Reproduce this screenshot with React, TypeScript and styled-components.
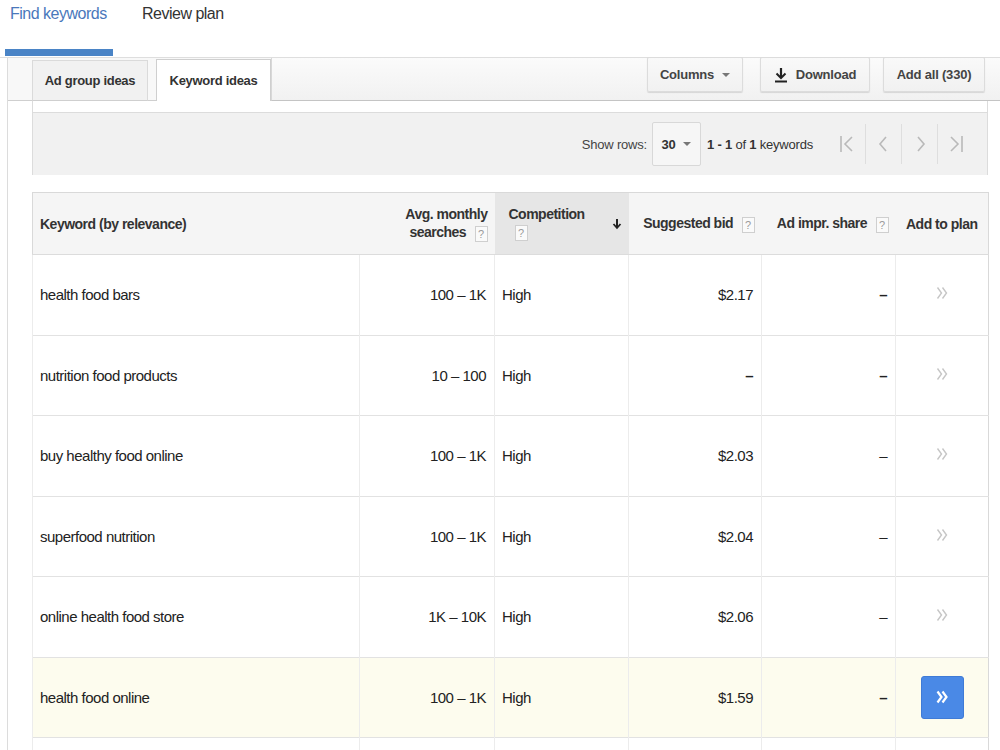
import React from "react";
import styled, { createGlobalStyle, css } from "styled-components";

const FONT = `"Liberation Sans", Arial, Helvetica, sans-serif`;

const Global = createGlobalStyle`
  html, body { margin: 0; padding: 0; background: #fff; }
  body { font-family: ${FONT}; color: #222; width: 1000px; height: 750px; overflow: hidden; }
  * { box-sizing: border-box; }
`;

const Page = styled.div`
  width: 1000px;
  height: 750px;
  overflow: hidden;
  display: flex;
  flex-direction: column;
  & > * { flex-shrink: 0; }
`;

const NavBar = styled.nav`
  display: flex;
  gap: 24px;
  height: 58px;
  padding-left: 5px;
  border-bottom: 1px solid #dedede;
  white-space: nowrap;
`;

const NavItem = styled.div<{ $active?: boolean }>`
  display: flex;
  flex-direction: column;
  justify-content: space-between;
  padding: 5px 0 1px 5px;
  width: ${(p) => (p.$active ? "108px" : "auto")};
  font-size: 16px;
  letter-spacing: -0.5px;
  color: ${(p) => (p.$active ? "#4a78bb" : "#333")};
`;

const NavBarIndicator = styled.div`
  height: 7px;
  margin-left: -5px;
  background: #4a84c6;
`;

const Frame = styled.div`
  flex: 1;
  margin-left: 7px;
  border-left: 1px solid #dcdcdc;
  display: flex;
  flex-direction: column;
  & > * { flex-shrink: 0; }
`;

const TabRow = styled.div`
  display: flex;
  height: 43px;
  background: #f8f8f8;
  white-space: nowrap;
`;

const TabLead = styled.div`
  width: 24px;
  border-bottom: 1px solid #cfcfcf;
`;

const Tab = styled.div<{ $active?: boolean }>`
  display: flex;
  align-items: center;
  justify-content: center;
  font-size: 13px;
  letter-spacing: -0.3px;
  font-weight: bold;
  color: #333;
  margin-top: 2px;
  border: 1px solid #dadada;
  ${(p) =>
    p.$active
      ? css`
          width: 115px;
          background: #fff;
          border-color: #cfcfcf;
          border-bottom: none;
          margin-top: 1px;
        `
      : css`
          width: 116px;
          background: #f1f1f1;
          border-bottom-color: #cfcfcf;
        `}
`;

const TabGap = styled.div`
  width: 8px;
  border-bottom: 1px solid #cfcfcf;
`;

const ActionBar = styled.div`
  flex: 1;
  display: flex;
  justify-content: flex-end;
  align-items: flex-start;
  padding-right: 15px;
  background: linear-gradient(#fbfbfb, #f1f1f1);
  border-left: 1px solid #d8d8d8;
  border-bottom: 1px solid #c4c4c4;
`;

const ActionButton = styled.div<{ $w: number; $ml: number }>`
  width: ${(p) => p.$w}px;
  margin-left: ${(p) => p.$ml}px;
  height: 35px;
  margin-top: -1px;
  display: flex;
  align-items: center;
  justify-content: center;
  gap: 8px;
  font-size: 13px;
  letter-spacing: -0.2px;
  font-weight: bold;
  color: #444;
  background: linear-gradient(#f9f9f9, #f1f1f1);
  border: 1px solid #dcdcdc;
  box-shadow: 0 1px 1px rgba(0, 0, 0, 0.12);
  border-radius: 2px;
`;

const Caret = styled.span`
  display: inline-block;
  width: 0;
  height: 0;
  border-left: 4px solid transparent;
  border-right: 4px solid transparent;
  border-top: 4px solid #777;
`;

const Content = styled.div`
  padding: 0 12px 0 24px;
  display: flex;
  flex-direction: column;
  & > * { flex-shrink: 0; }
`;

const Panel = styled.div`
  border-left: 1px solid #dcdcdc;
  border-right: 1px solid #dcdcdc;
  padding-top: 11px;
`;

const Toolbar = styled.div`
  height: 63px;
  background: #f1f1f1;
  border-top: 1px solid #dcdcdc;
  display: flex;
  align-items: center;
  justify-content: flex-end;
  padding-right: 14px;
  font-size: 13px;
  letter-spacing: -0.2px;
  color: #444;
  white-space: nowrap;
`;

const ShowRowsLabel = styled.span`
  margin-right: 5px;
`;

const RowSelect = styled.div`
  width: 49px;
  height: 44px;
  display: flex;
  align-items: center;
  justify-content: center;
  gap: 8px;
  background: #f6f6f6;
  border: 1px solid #d8d8d8;
  border-radius: 2px;
  font-weight: bold;
  color: #333;
`;

const RangeText = styled.span`
  margin-left: 6px;
  margin-right: 16px;
  color: #333;
  b { font-weight: bold; }
`;

const Pager = styled.div`
  display: flex;
  align-items: center;
  height: 40px;
`;

const PagerBtn = styled.div<{ $sep?: boolean }>`
  width: 36px;
  height: 40px;
  display: flex;
  align-items: center;
  justify-content: center;
  border-left: ${(p) => (p.$sep ? "1px solid #dedede" : "none")};
`;

const Table = styled.table`
  margin-top: 17px;
  width: 956px;
  border-collapse: collapse;
  table-layout: fixed;
  border: 1px solid #d9d9d9;
`;

const HeadCell = styled.th<{ $align?: string; $sorted?: boolean }>`
  height: 62px;
  padding: 0 7px 0 7px;
  background: ${(p) => (p.$sorted ? "#e6e6e6" : "#f5f5f5")};
  text-align: ${(p) => p.$align || "left"};
  font-size: 14px;
  letter-spacing: -0.5px;
  font-weight: bold;
  color: #333;
  line-height: 18px;
  vertical-align: middle;
  white-space: nowrap;
  border-bottom: 1px solid #dcdcdc;
`;

const SortHead = styled.div`
  display: flex;
  align-items: center;
  justify-content: space-between;
  padding: 0 7px 0 14px;
`;

const SortTitle = styled.div`
  display: flex;
  flex-direction: column;
  align-items: flex-start;
  gap: 2px;
  margin-top: -2px;
`;

const Help = styled.span`
  display: inline-block;
  width: 13px;
  height: 16px;
  margin-left: 5px;
  border: 1px solid #cfcfcf;
  font-size: 11px;
  font-weight: normal;
  letter-spacing: 0;
  line-height: 14px;
  text-align: center;
  color: #9a9a9a;
  vertical-align: middle;
  background: #fafafa;
`;

const Row = styled.tr<{ $highlight?: boolean }>`
  background: ${(p) => (p.$highlight ? "#fdfcee" : "#fff")};
`;

const Cell = styled.td<{ $align?: string; $pad?: number }>`
  height: 80.5px;
  padding: 0 ${(p) => p.$pad ?? 8}px 0 ${(p) => p.$pad ?? 7}px;
  text-align: ${(p) => p.$align || "left"};
  font-size: 15px;
  letter-spacing: -0.5px;
  color: #222;
  border-top: 1px solid #e2e2e2;
  border-left: 1px solid #ececec;
  vertical-align: middle;
  white-space: nowrap;
`;

const StubCell = styled.td`
  height: 14px;
  border-top: 1px solid #e2e2e2;
  border-left: 1px solid #ececec;
`;

const AddButton = styled.div`
  width: 43px;
  height: 43px;
  margin: 0 auto;
  display: flex;
  align-items: center;
  justify-content: center;
  background: #4a89e6;
  border: 1px solid #3f7bd6;
  border-radius: 3px;
`;

const rows = [
  { kw: "health food bars", avg: "100 – 1K", comp: "High", bid: "$2.17", dashBold: true },
  { kw: "nutrition food products", avg: "10 – 100", comp: "High", bid: "", dashBold: true },
  { kw: "buy healthy food online", avg: "100 – 1K", comp: "High", bid: "$2.03" },
  { kw: "superfood nutrition", avg: "100 – 1K", comp: "High", bid: "$2.04" },
  { kw: "online health food store", avg: "1K – 10K", comp: "High", bid: "$2.06" },
  { kw: "health food online", avg: "100 – 1K", comp: "High", bid: "$1.59", highlight: true, dashBold: true },
];

const DownloadIcon = () => (
  <svg width="14" height="16" viewBox="0 0 14 16">
    <path d="M7 1v9" stroke="#222" strokeWidth="2.2" />
    <path d="M2.5 6.5L7 11l4.5-4.5" stroke="#222" strokeWidth="2" fill="none" />
    <path d="M1 14.5h12" stroke="#222" strokeWidth="2" />
  </svg>
);

const PIcon = ({ d, bar }: { d: string; bar?: number }) => (
  <svg width="20" height="22" viewBox="0 0 20 22">
    <polyline points={d} fill="none" stroke="#b9b9b9" strokeWidth="1.6" />
    {bar !== undefined && <line x1={bar} y1="3" x2={bar} y2="19" stroke="#b9b9b9" strokeWidth="1.6" />}
  </svg>
);

const SortArrow = () => (
  <svg width="10" height="12" viewBox="0 0 10 12">
    <path d="M5 1v8" stroke="#222" strokeWidth="2" />
    <path d="M1.5 6L5 10l3.5-4" stroke="#222" strokeWidth="1.8" fill="none" />
  </svg>
);

const DoubleChevron = ({ color, w }: { color: string; w: number }) => (
  <svg width="12" height="14" viewBox="0 0 12 14">
    <polyline points="1.5,1.5 5.5,7 1.5,12.5" fill="none" stroke={color} strokeWidth={w} />
    <polyline points="6.5,1.5 10.5,7 6.5,12.5" fill="none" stroke={color} strokeWidth={w} />
  </svg>
);

export default function App() {
  return (
    <Page>
      <Global />
      <NavBar>
        <NavItem $active>
          <span>Find keywords</span>
          <NavBarIndicator />
        </NavItem>
        <NavItem>
          <span>Review plan</span>
        </NavItem>
      </NavBar>
      <Frame>
        <TabRow>
          <TabLead />
          <Tab>Ad group ideas</Tab>
          <TabGap />
          <Tab $active>Keyword ideas</Tab>
          <ActionBar>
            <ActionButton $w={96} $ml={0}>
              Columns <Caret />
            </ActionButton>
            <ActionButton $w={110} $ml={17}>
              <DownloadIcon />
              Download
            </ActionButton>
            <ActionButton $w={102} $ml={13}>
              Add all (330)
            </ActionButton>
          </ActionBar>
        </TabRow>
        <Content>
          <Panel>
            <Toolbar>
              <ShowRowsLabel>Show rows:</ShowRowsLabel>
              <RowSelect>
                30 <Caret />
              </RowSelect>
              <RangeText>
                <b>1 - 1</b> of <b>1</b> keywords
              </RangeText>
              <Pager>
                <PagerBtn>
                  <PIcon d="15,4 8,11 15,18" bar={4} />
                </PagerBtn>
                <PagerBtn $sep>
                  <PIcon d="12,4 6,11 12,18" />
                </PagerBtn>
                <PagerBtn $sep>
                  <PIcon d="8,4 14,11 8,18" />
                </PagerBtn>
                <PagerBtn $sep>
                  <PIcon d="5,4 12,11 5,18" bar={16} />
                </PagerBtn>
              </Pager>
            </Toolbar>
          </Panel>
          <Table>
            <colgroup>
              <col style={{ width: 327 }} />
              <col style={{ width: 135 }} />
              <col style={{ width: 134 }} />
              <col style={{ width: 133 }} />
              <col style={{ width: 134 }} />
              <col style={{ width: 93 }} />
            </colgroup>
            <thead>
              <tr>
                <HeadCell>Keyword (by relevance)</HeadCell>
                <HeadCell $align="right">
                  Avg. monthly
                  <br />
                  searches <Help>?</Help>
                </HeadCell>
                <HeadCell $sorted style={{ padding: 0 }}>
                  <SortHead>
                    <SortTitle>
                      <span>Competition</span>
                      <Help style={{ marginLeft: 6 }}>?</Help>
                    </SortTitle>
                    <SortArrow />
                  </SortHead>
                </HeadCell>
                <HeadCell $align="right">
                  Suggested bid <Help>?</Help>
                </HeadCell>
                <HeadCell $align="right">
                  Ad impr. share <Help>?</Help>
                </HeadCell>
                <HeadCell $align="center">Add to plan</HeadCell>
              </tr>
            </thead>
            <tbody>
              {rows.map((r) => (
                <Row key={r.kw} $highlight={r.highlight}>
                  <Cell>{r.kw}</Cell>
                  <Cell $align="right">{r.avg}</Cell>
                  <Cell>{r.comp}</Cell>
                  <Cell $align="right">{r.bid || <b>–</b>}</Cell>
                  <Cell $align="right">{r.dashBold ? <b>–</b> : "–"}</Cell>
                  <Cell $align="center" $pad={0}>
                    {r.highlight ? (
                      <AddButton>
                        <DoubleChevron color="#fff" w={2.2} />
                      </AddButton>
                    ) : (
                      <DoubleChevron color="#c6c6c6" w={1.4} />
                    )}
                  </Cell>
                </Row>
              ))}
              <tr>
                <StubCell />
                <StubCell />
                <StubCell />
                <StubCell />
                <StubCell />
                <StubCell />
              </tr>
            </tbody>
          </Table>
        </Content>
      </Frame>
    </Page>
  );
}
